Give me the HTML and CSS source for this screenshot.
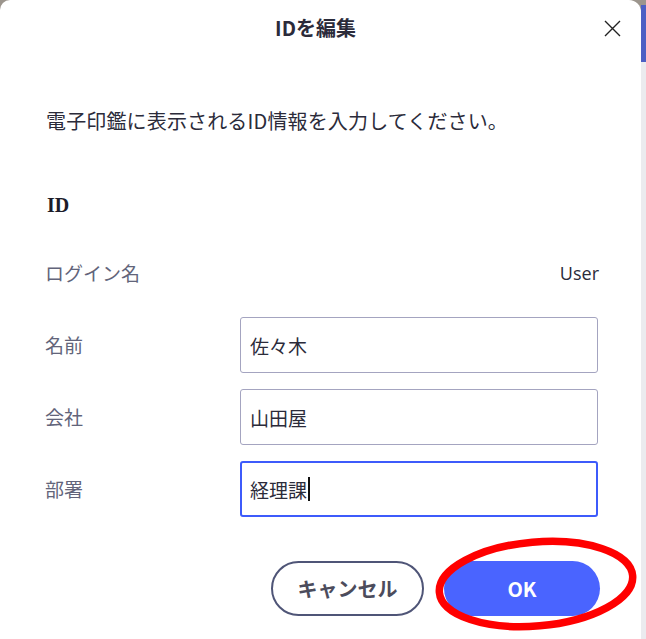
FILE: index.html
```html
<!DOCTYPE html>
<html lang="ja">
<head>
<meta charset="utf-8">
<title>IDを編集</title>
<link rel="stylesheet" href="styles.css">
</head>
<body>
<div class="screen">
  <div class="dialog">
    <header class="dlg-head">
      <span></span>
      <h1 class="dlg-title">IDを編集</h1>
      <button class="close" aria-label="閉じる">
        <svg width="17" height="17" viewBox="0 0 17 17"><path d="M1 1L16 16M16 1L1 16" stroke="#222" stroke-width="1.4" fill="none"/></svg>
      </button>
    </header>
    <p class="desc">電子印鑑に表示されるID情報を入力してください。</p>
    <h2 class="section">ID</h2>
    <div class="row static">
      <span class="label">ログイン名</span>
      <span class="value">User</span>
    </div>
    <div class="row">
      <span class="label">名前</span>
      <div class="input">佐々木</div>
    </div>
    <div class="row">
      <span class="label">会社</span>
      <div class="input">山田屋</div>
    </div>
    <div class="row">
      <span class="label">部署</span>
      <div class="input focus">経理課<span class="caret"></span></div>
    </div>
    <div class="actions">
      <button class="btn cancel">キャンセル</button>
      <button class="btn ok">OK</button>
    </div>
    <svg class="annot" width="212" height="110" viewBox="0 0 212 110">
      <ellipse cx="106" cy="54" rx="97" ry="42" transform="rotate(-5 106 54)" fill="none" stroke="#ff0000" stroke-width="7.5"/>
    </svg>
  </div>
  <div class="strip">
    <div class="strip-top"></div>
    <div class="strip-blue"></div>
    <div class="strip-rest"></div>
  </div>
</div>
</body>
</html>
```

FILE: styles.css
```css
html, body {
  margin: 0;
  padding: 0;
  background: #ffffff;
}
.screen {
  display: flex;
  width: 646px;
  height: 639px;
  overflow: hidden;
  background: #9c958d;
}
.dialog {
  position: relative;
  width: 641px;
  flex: none;
  background: #ffffff;
  border-radius: 10px 12px 0 0;
  font-family: "Noto Sans CJK JP", "Noto Sans", sans-serif;
  color: #2b2b3a;
}
.dlg-head {
  height: 56px;
  display: grid;
  grid-template-columns: 1fr auto 1fr;
  align-items: center;
  padding-right: 20px;
}
.dlg-title {
  margin: 0;
  font-size: 20px;
  font-weight: 700;
  line-height: 30px;
  color: #2b2b3a;
  padding-left: 10px;
}
.close {
  justify-self: end;
  width: 17px;
  height: 17px;
  padding: 0;
  border: 0;
  background: none;
  display: flex;
}
.desc {
  margin: 50px 0 0 46px;
  font-size: 20px;
  line-height: 30px;
  color: #2b2b3a;
  letter-spacing: 0.15px;
}
.section {
  margin: 54px 0 0 47px;
  font-family: "Liberation Serif", serif;
  font-weight: 700;
  font-size: 20px;
  line-height: 30px;
  color: #1c1c2a;
}
.row {
  display: flex;
  align-items: center;
  margin: 16px 43px 0 45px;
  height: 56px;
}
.row.static {
  margin-top: 38px;
  height: 30px;
  justify-content: space-between;
  margin-right: 42px;
}
.row.static + .row {
  margin-top: 29px;
}
.label {
  width: 195px;
  flex: none;
  font-size: 19px;
  line-height: 30px;
  color: #62647a;
}
.value {
  font-family: "Open Sans", "Noto Sans", sans-serif;
  font-size: 18px;
  color: #2b2b3a;
}
.input {
  flex: 1;
  height: 56px;
  box-sizing: border-box;
  border: 1.5px solid #a4a4c0;
  border-radius: 3px;
  display: flex;
  align-items: center;
  padding-left: 9px;
  font-size: 19px;
  color: #2b2b3a;
}
.input.focus {
  border: 2px solid #3d5bfb;
  padding-left: 8px;
}
.caret {
  display: inline-block;
  width: 1.5px;
  height: 24px;
  background: #111;
  margin-left: 1px;
}
.actions {
  display: flex;
  justify-content: flex-end;
  gap: 20px;
  margin: 44px 41px 0 0;
}
.btn {
  height: 55px;
  border-radius: 28px;
  font-family: "Noto Sans CJK JP", "Noto Sans", sans-serif;
  font-size: 20px;
  font-weight: 700;
  padding: 0;
}
.cancel {
  width: 153px;
  background: #ffffff;
  border: 2.5px solid #4f5577;
  color: #4c4c5c;
}
.ok {
  width: 156px;
  background: #4a64ff;
  border: 0;
  color: #ffffff;
}
.annot {
  position: absolute;
  left: 430px;
  top: 530px;
}
.strip {
  flex: 1;
  display: flex;
  flex-direction: column;
}
.strip-top {
  height: 5px;
  background: #9c958d;
}
.strip-blue {
  height: 57px;
  background: #4d5fc4;
}
.strip-rest {
  flex: 1;
  background: #ebebef;
}
```
